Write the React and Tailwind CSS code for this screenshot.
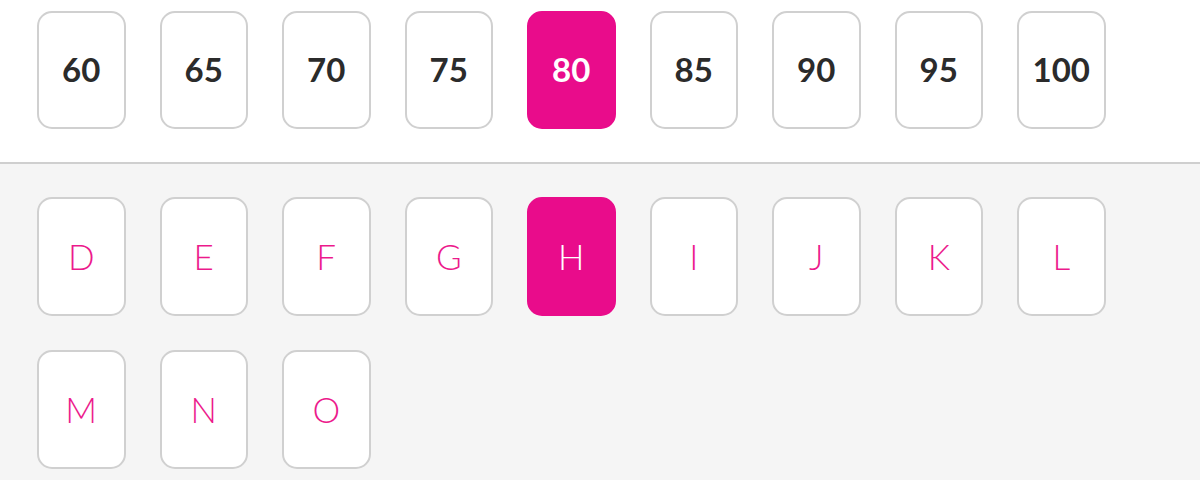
const sizes = [60, 65, 70, 75, 80, 85, 90, 95, 100];
const letters = ["D", "E", "F", "G", "H", "I", "J", "K", "L", "M", "N", "O"];

const Tile = ({ active, children, bold }) => (
  <button
    className={
      "w-[88.5px] rounded-[15px] flex items-center justify-center border-2 " +
      (active
        ? "bg-[#e90c8b] border-[#e90c8b] text-white"
        : bold
        ? "bg-white border-[#d0d0d0] text-[#2b2b2b]"
        : "bg-white border-[#d0d0d0] text-[#ec1a8c]") +
      (bold ? " h-[118px] text-[33px] font-bold" : " h-[119px] text-[35px] font-light")
    }
  >
    {children}
  </button>
);

const App = () => {
  return (
    <div className="w-[1200px] h-[480px] flex flex-col font-['Lato',sans-serif] overflow-hidden">
      {/* Size picker */}
      <div className="bg-white pt-[11px] pb-[33px] pl-[37px] border-b-2 border-[#cfcfcf]">
        <div className="flex gap-[34px]">
          {sizes.map((s) => (
            <Tile key={s} bold active={s === 80}>
              {s}
            </Tile>
          ))}
        </div>
      </div>

      {/* Cup picker */}
      <div className="flex-1 bg-[#f5f5f5] pt-[33px] pl-[37px]">
        <div className="grid grid-cols-[repeat(9,88.5px)] gap-x-[34px] gap-y-[34px]">
          {letters.map((l) => (
            <Tile key={l} active={l === "H"}>
              {l}
            </Tile>
          ))}
        </div>
      </div>
    </div>
  );
};

export default App;
